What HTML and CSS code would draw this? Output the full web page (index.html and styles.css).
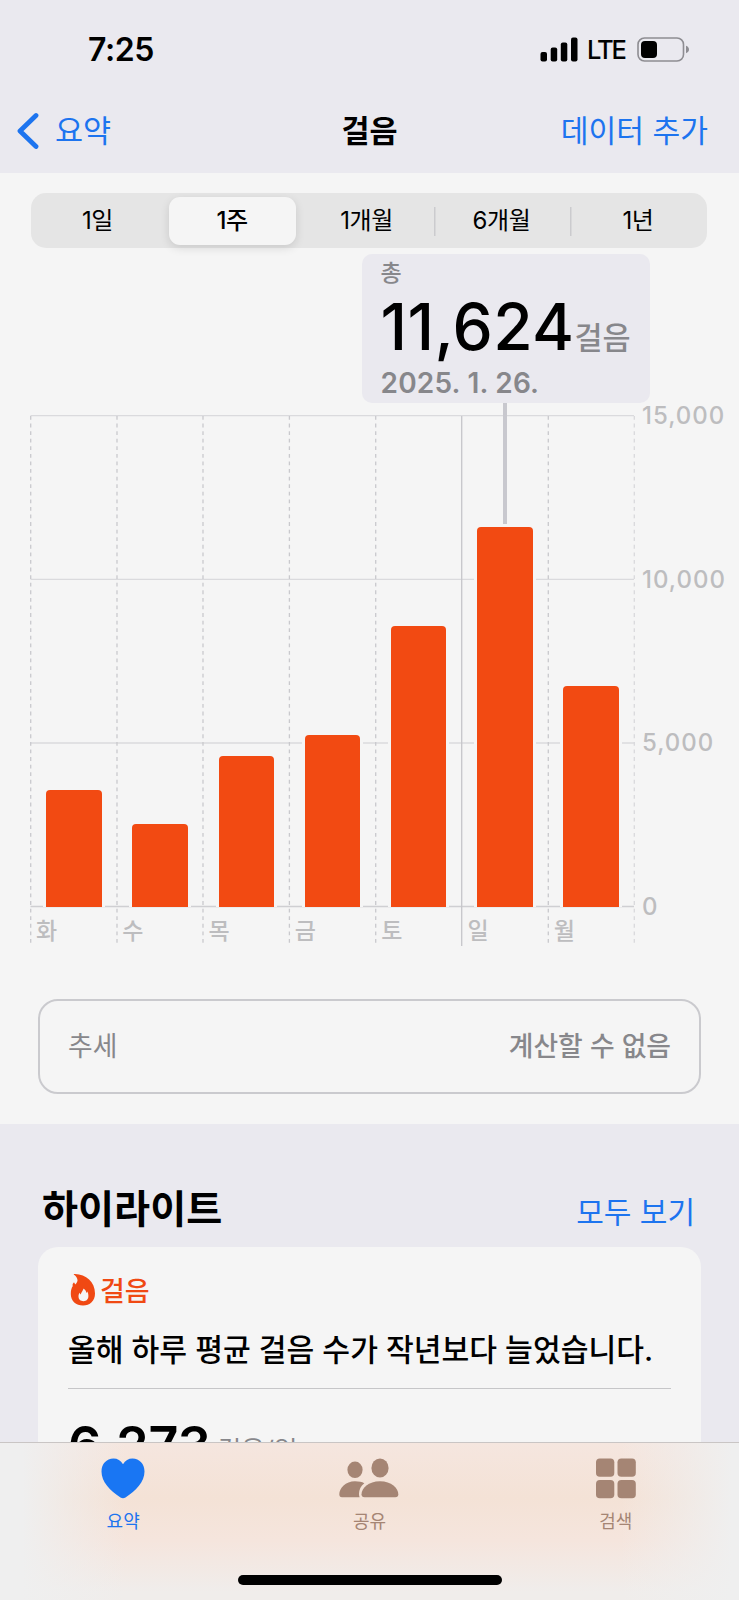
FILE: index.html
```html
<!DOCTYPE html>
<html lang="ko">

<head>
  <meta charset="UTF-8" />
  <title>걸음</title>
  <link rel="stylesheet" href="styles.css">
</head>

<body>
  <header class="top">
    <div class="status-bar">
      <div class="time">7:25</div>
      <div class="status-icons">
        <svg class="signal" width="38" height="25" viewBox="0 0 38 25">
          <rect x="0.5" y="15" width="6.5" height="9.5" rx="2" />
          <rect x="10.7" y="10.5" width="6.5" height="14" rx="2" />
          <rect x="20.8" y="5.5" width="6.5" height="19" rx="2" />
          <rect x="31" y="0.5" width="6.5" height="24" rx="2" />
        </svg>
        <span class="network">LTE</span>
        <svg class="battery" width="53" height="25" viewBox="0 0 53 25">
          <rect x="1" y="1" width="45.5" height="23" rx="6.5" fill="none" stroke="#8e8d92" stroke-width="1.6" />
          <rect x="4" y="4" width="16" height="17" rx="4" />
          <path d="M49 8.8c1.8.6 3 2 3 3.7s-1.2 3.1-3 3.7z" fill="#8e8d92" />
        </svg>
      </div>
    </div>
    <nav class="nav-bar">
      <a class="back">
        <svg width="22" height="38" viewBox="0 0 22 38">
          <path d="M19 3.5 3 19l16 15.5" fill="none" stroke="#1d74ef" stroke-width="4.8" stroke-linecap="round" stroke-linejoin="round" />
        </svg>
        <span>요약</span>
      </a>
      <h1>걸음</h1>
      <a class="add">데이터 추가</a>
    </nav>
  </header>

  <main>
    <section class="panel">
      <div class="segments">
        <div class="segment">1일</div>
        <div class="segment active">1주</div>
        <div class="segment">1개월</div>
        <div class="segment line">6개월</div>
        <div class="segment line">1년</div>
      </div>

      <div class="chart">
        <div class="plot">
          <svg class="grid" width="605" height="532" viewBox="0 0 605 532">
            <g stroke="#dadadd" stroke-width="1.3">
              <path d="M.5.7H604M.5 164.4H604M.5 328H604" />
              <path d="M.5 491.5H604" stroke="#cfcfd2" />
            </g>
            <g stroke="#c9c9cd" stroke-width="1.3" stroke-dasharray="3.8 3.78">
              <path d="M.7 1V531M87 1V531M173 1V531M259.4 1V531M345.7 1V531M518.3 1V531" />
              <path d="M604.3 1V531" stroke="#d9d9dc" />
            </g>
            <path d="M431.7 1V531" stroke="#c6c6ca" stroke-width="1.3" />
          </svg>
          <div class="bars">
            <div class="bar" style="height: 117px"></div>
            <div class="bar" style="height: 83px"></div>
            <div class="bar" style="height: 151px"></div>
            <div class="bar" style="height: 172px"></div>
            <div class="bar" style="height: 281px"></div>
            <div class="bar" style="height: 380.5px"></div>
            <div class="bar" style="height: 221px"></div>
          </div>
          <div class="days">
            <span>화</span>
            <span>수</span>
            <span>목</span>
            <span>금</span>
            <span>토</span>
            <span>일</span>
            <span>월</span>
          </div>
        </div>
        <div class="scale">
          <span>15,000</span>
          <span>10,000</span>
          <span>5,000</span>
          <span>0</span>
        </div>
        <div class="tooltip">
          <div class="tooltip-label">총</div>
          <div class="tooltip-value"><b>11,624</b><span>걸음</span></div>
          <div class="tooltip-date">2025. 1. 26.</div>
        </div>
        <div class="stem"></div>
      </div>

      <div class="trend">
        <span>추세</span>
        <strong>계산할 수 없음</strong>
      </div>
    </section>

    <section class="highlights">
      <div class="heading">
        <h2>하이라이트</h2>
        <a>모두 보기</a>
      </div>
      <div class="card">
        <div class="card-title">
          <svg width="26" height="32" viewBox="0 0 26 32">
            <path d="M4 .8C3.3.3 4 0 5 .1 16 .5 25 8 25 19.5 25 27 20 31.500 13 31.500S.8 27 .8 20C.8 16.500 1.500 14 2.800 12 2.300 11 2.700 9.300 3.600 8.700c.5-.3 1 .1 1.100.7l.5 1.200C7 8.800 8 7 7.300 5 6.800 3.300 5.500 1.800 4 .8z" fill="#f04913" />
            <path d="M13.300 15.300c-.4-.3-.1-.6.3-.5 1.700.7 2.600 2.300 2.700 4.200.5-.3.7-.9.8-1.400.8.9 1.300 2.500 1.300 4.400 0 3.200-2 5.200-4.900 5.200s-5-1.900-5-4.700c0-1.600.5-2.900 1.300-3.700.1.7.4 1.300 1 1.600.4-2 1.500-2.600 2.500-5.100z" fill="#f5f5f5" />
          </svg>
          <span>걸음</span>
        </div>
        <p>올해 하루 평균 걸음 수가 작년보다 늘었습니다.</p>
        <div class="average"><b>6,273</b><span>걸음/일</span></div>
      </div>
    </section>
  </main>

  <footer class="tab-bar">
    <div class="tabs">
      <div class="tab selected">
        <svg width="44" height="41" viewBox="0 0 44 41">
          <path d="M22 6.300C19.800 2.400 16.500.5 12.500.5 5.500.5.5 6 .5 13.500.5 24 9 32.500 19.500 39.500c1.700 1.100 3.300 1.100 5 0C35 32.500 43.500 24 43.500 13.500 43.500 6 38.500.5 31.500.5c-4 0-7.300 1.900-9.500 5.800z" />
        </svg>
        <span>요약</span>
      </div>
      <div class="tab">
        <svg width="60" height="41" viewBox="0 0 60 41">
          <ellipse cx="16" cy="11.8" rx="7.6" ry="8.3" />
          <ellipse cx="41" cy="10" rx="8.6" ry="9.5" />
          <path d="M3 39.300C1.200 39.300.3 38 .3 36.300.3 30.500 6.500 23.300 16 23.300c3.900 0 7 .7 9.300 1.900-3.500 2.700-5.300 6.700-5.300 10.600 0 1.300.1 2.500.6 3.500z" />
          <path d="M25.500 39.300c-2 0-3-1.200-3-3C22.500 30.500 29.500 23.300 41 23.300S59.300 30.500 59.300 36.300c0 1.800-1 3-3 3z" />
        </svg>
        <span>공유</span>
      </div>
      <div class="tab">
        <svg width="40" height="41" viewBox="0 0 40 41">
          <rect x="0" y=".5" width="18.3" height="18.3" rx="3.8" />
          <rect x="21.5" y=".5" width="18.3" height="18.3" rx="3.8" />
          <rect x="0" y="22" width="18.3" height="18.3" rx="3.8" />
          <rect x="21.5" y="22" width="18.3" height="18.3" rx="3.8" />
        </svg>
        <span>검색</span>
      </div>
    </div>
    <div class="home-bar"></div>
  </footer>
</body>

</html>
```
FILE: styles.css
```css
* {
  box-sizing: border-box;
}

body {
  margin: 0;
  height: 1600px;
  overflow: hidden;
  background: #eae9ef;
  color: #000;
  font-family: Inter, "Noto Sans CJK KR", sans-serif;
}

h1,
h2,
p {
  margin: 0;
}

svg {
  display: block;
}

.top {
  height: 173px;
}

.status-bar {
  display: flex;
  justify-content: space-between;
  height: 98px;
  padding: 0 49px 0 88px;
}

.time {
  font-size: 32px;
  font-weight: 600;
  line-height: 99px;
  letter-spacing: -0.4px;
}

.status-icons {
  display: flex;
  align-items: center;
}

.network {
  margin: 1px 12px 0 9px;
  font-size: 25.5px;
  font-weight: 500;
  letter-spacing: -2px;
}

.nav-bar {
  display: grid;
  grid-template-columns: 1fr auto 1fr;
  align-items: center;
  height: 65px;
  padding: 0 31px 0 17px;
  font-size: 30.5px;
}

.nav-bar span,
.nav-bar h1,
.add {
  padding-bottom: 4px;
}

.nav-bar a,
.heading a {
  color: #1d74ef;
}

.back {
  display: flex;
  align-items: center;
  gap: 16px;
}

.nav-bar h1 {
  font-size: 30.5px;
  font-weight: 600;
  padding-left: 14px;
}

.add {
  justify-self: end;
  font-size: 30.2px;
}

.panel {
  height: 951px;
  padding: 20px 0 0;
  background: #f5f5f5;
}

.segments {
  display: grid;
  grid-template-columns: 134px 135px 134px 136px 137px;
  height: 55px;
  margin: 0 32px 0 30.5px;
  background: #e5e5e5;
  border-radius: 15px;
}

.segment {
  font-size: 24px;
  font-weight: 400;
  line-height: 56px;
  text-align: center;
  letter-spacing: -0.4px;
}

.segment.active {
  height: 48px;
  margin: 4px;
  background: #f5f5f5;
  border-radius: 11px;
  box-shadow: 0 3px 10px rgba(0, 0, 0, 0.12);
  font-weight: 500;
  line-height: 48px;
}

.segment.line {
  background: linear-gradient(#cbcbce, #cbcbce) no-repeat 0 50% / 1.5px 29px;
}

.chart {
  position: relative;
  display: flex;
  gap: 8px;
  height: 699px;
  padding: 167px 0 0 30px;
}

.plot {
  position: relative;
  width: 604px;
}

.grid {
  position: absolute;
  top: 0;
  left: 0;
}

.bars {
  position: relative;
  display: grid;
  grid-template-columns: repeat(7, 1fr);
  align-items: end;
  justify-items: center;
  height: 492px;
  padding-left: 1px;
}

.bar {
  width: 55.5px;
  background: #f24a12;
  border-radius: 4px 4px 0 0;
  box-shadow: -3px 0 #f5f5f5, 3px 0 #f5f5f5;
}

.days {
  display: grid;
  grid-template-columns: repeat(7, 1fr);
  color: #bdbdbf;
  font-size: 23px;
  font-weight: 500;
  line-height: 49px;
}

.days span {
  padding-left: 6px;
}

.scale {
  display: flex;
  flex-direction: column;
  justify-content: space-between;
  height: 517px;
  margin-top: -12px;
  color: #bdbdbf;
  font-size: 24px;
  font-weight: 500;
  line-height: 26px;
  letter-spacing: 1px;
}

.tooltip {
  position: absolute;
  top: 6px;
  left: 361.5px;
  width: 288px;
  height: 149px;
  padding: 5px 19px 0;
  background: #eae9ef;
  border-radius: 10px;
  color: #87878b;
  white-space: nowrap;
}

.tooltip-label {
  font-size: 23px;
  font-weight: 500;
  line-height: 28px;
}

.tooltip-value {
  display: flex;
  align-items: baseline;
  height: 77px;
  font-size: 30.5px;
  font-weight: 500;
  line-height: 79px;
}

.tooltip-value b {
  color: #000;
  font-size: 64px;
  font-weight: 500;
  letter-spacing: 0.4px;
}

.tooltip-value span {
  position: relative;
  top: -1px;
}

.tooltip-date {
  font-size: 28px;
  font-weight: 600;
  line-height: 38px;
  letter-spacing: 0.2px;
}

.stem {
  position: absolute;
  top: 155px;
  left: 503px;
  width: 4px;
  height: 121px;
  background: #c8c8ce;
}

.trend {
  display: flex;
  justify-content: space-between;
  align-items: center;
  height: 95px;
  margin: 52px 38px 0;
  padding: 0 28px 4px;
  border: 2px solid #cacace;
  border-radius: 20px;
  color: #87878b;
  font-size: 26.8px;
}

.trend strong {
  font-weight: 500;
}

.highlights {
  padding: 56px 38px 0;
}

.heading {
  display: flex;
  justify-content: space-between;
  align-items: baseline;
  height: 67px;
  padding: 0 6px 0 4px;
}

.heading h2 {
  font-size: 39.2px;
  font-weight: 700;
  line-height: 58px;
}

.heading a {
  font-size: 30px;
}

.card {
  height: 400px;
  padding: 26px 30px 0;
  background: #f5f5f5;
  border-radius: 20px;
}

.card-title {
  display: flex;
  align-items: center;
  gap: 4px;
  height: 34px;
  padding-left: 2px;
  color: #f04913;
  font-size: 27px;
  font-weight: 500;
}

.card-title span {
  padding-bottom: 2px;
}

.card p {
  height: 82px;
  border-bottom: 1px solid #c6c6c8;
  font-size: 30.2px;
  font-weight: 500;
  line-height: 87px;
  white-space: nowrap;
}

.average {
  display: flex;
  align-items: baseline;
  gap: 7px;
  padding: 25px 0 0;
  color: #87878b;
  font-size: 25.5px;
}

.average b {
  color: #000;
  font-size: 52px;
  font-weight: 600;
}

.average span {
  transform: translateY(-5px);
}

.tab-bar {
  position: fixed;
  right: 0;
  bottom: 0;
  left: 0;
  display: flex;
  flex-direction: column;
  justify-content: space-between;
  align-items: center;
  height: 158px;
  padding: 15px 0 15px;
  border-top: 1px solid #c9c5c4;
  background:
    linear-gradient(to right, #efefef 3%, rgba(239, 239, 239, 0) 17%, rgba(239, 239, 239, 0) 84%, #efefef 99%),
    linear-gradient(#f5e6df, #f4e2d6 35%, #f5e5dd 62%, #f0edeb 95%);
}

.tabs {
  display: grid;
  grid-template-columns: repeat(3, 1fr);
  width: 100%;
}

.tab {
  display: flex;
  flex-direction: column;
  align-items: center;
  gap: 9px;
  color: #a58574;
  fill: #a58574;
  font-size: 18px;
  line-height: 28px;
}

.tab.selected {
  color: #1d74ef;
  fill: #1976f3;
}

.home-bar {
  width: 264px;
  height: 10px;
  background: #000;
  border-radius: 5px;
}
```
